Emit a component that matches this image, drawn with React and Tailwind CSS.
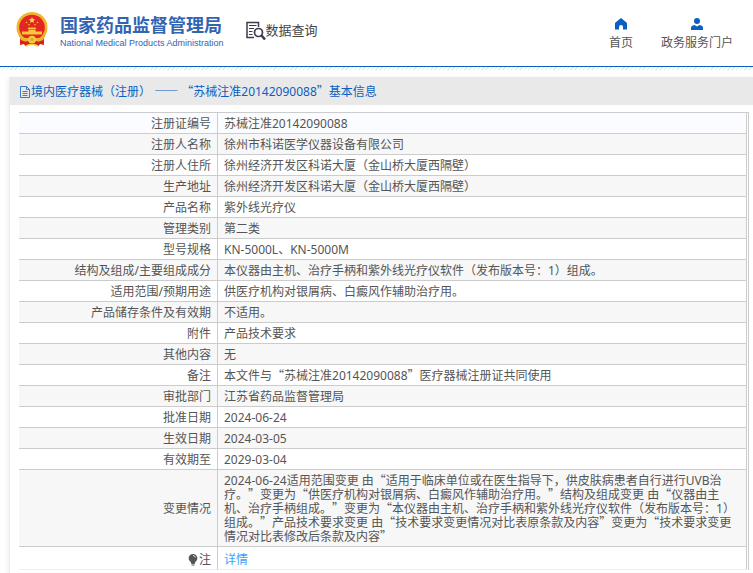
import React from "react";

const rows = [
  { label: "注册证编号", value: "苏械注准20142090088" },
  { label: "注册人名称", value: "徐州市科诺医学仪器设备有限公司" },
  { label: "注册人住所", value: "徐州经济开发区科诺大厦（金山桥大厦西隔壁）" },
  { label: "生产地址", value: "徐州经济开发区科诺大厦（金山桥大厦西隔壁）" },
  { label: "产品名称", value: "紫外线光疗仪" },
  { label: "管理类别", value: "第二类" },
  { label: "型号规格", value: "KN-5000L、KN-5000M" },
  {
    label: "结构及组成/主要组成成分",
    value: "本仪器由主机、治疗手柄和紫外线光疗仪软件（发布版本号：1）组成。",
  },
  { label: "适用范围/预期用途", value: "供医疗机构对银屑病、白癜风作辅助治疗用。" },
  { label: "产品储存条件及有效期", value: "不适用。" },
  { label: "附件", value: "产品技术要求" },
  { label: "其他内容", value: "无" },
  { label: "备注", value: "本文件与“苏械注准20142090088”医疗器械注册证共同使用" },
  { label: "审批部门", value: "江苏省药品监督管理局" },
  { label: "批准日期", value: "2024-06-24" },
  { label: "生效日期", value: "2024-03-05" },
  { label: "有效期至", value: "2029-03-04" },
  {
    label: "变更情况",
    value:
      "2024-06-24适用范围变更 由“适用于临床单位或在医生指导下，供皮肤病患者自行进行UVB治疗。”变更为“供医疗机构对银屑病、白癜风作辅助治疗用。”结构及组成变更 由“仪器由主机、治疗手柄组成。”变更为“本仪器由主机、治疗手柄和紫外线光疗仪软件（发布版本号：1）组成。”产品技术要求变更 由“技术要求变更情况对比表原条款及内容”变更为“技术要求变更情况对比表修改后条款及内容”",
  },
];

// Curly quotes and dashes take the full-width form of the Chinese font
const Zh = ({ children }) =>
  children.split(/([“”—]+)/).map((part, i) =>
    i % 2 ? (
      <span key={i} className="font-['Noto_Sans_CJK_SC',sans-serif] leading-none">
        {part}
      </span>
    ) : (
      part
    )
  );

const Emblem = () => (
  <svg className="h-9 w-8" viewBox="0 0 32 36" aria-hidden="true">
    <path d="M4 23v10l4-1 2 2 4-1.500 2 .5 2-.5 4 1.500 2-2 4 1V23z" fill="#d8201c" />
    <circle cx="16" cy="15.500" r="15.500" fill="#f0b52c" />
    <circle cx="16" cy="15.500" r="12.800" fill="#e32621" />
    <path
      d="M16 5l.9 2.100 2.300.2-1.800 1.500.6 2.200-2-1.200-2 1.200.6-2.200-1.800-1.500 2.300-.2z"
      fill="#ffd94a"
    />
    <g fill="#fbc638">
      <circle cx="10.500" cy="10.500" r=".8" />
      <circle cx="21.500" cy="10.500" r=".8" />
      <circle cx="13" cy="12.800" r=".8" />
      <circle cx="19" cy="12.800" r=".8" />
      <path d="M12.500 15.500h7l1 1.500h-9zM12.500 17.500h7v2h-7zM6 19.500h20v3H6z" />
    </g>
    <path d="M2 22c4 5 9 4 14 4s10 1 14-4l-3 6c-6 3-16 3-22 0z" fill="#f0b52c" />
    <circle cx="16" cy="27.500" r="3.800" fill="#f8ca45" />
    <circle cx="16" cy="27.500" r="1.800" fill="#e9a828" />
    <path d="M8 30l4-1 1.500 2.500L9 34zM24 30l-4-1-1.500 2.500L23 34z" fill="#d8201c" />
    <path d="M10 34q6-3.500 12 0" fill="none" stroke="#f8ca45" strokeWidth="1.600" />
  </svg>
);

const SearchDocIcon = () => (
  <svg className="h-5 w-5" viewBox="0 0 20 20" fill="none" stroke="#3d3c4e" aria-hidden="true">
    <path d="M12.500 7V2.500H1v15h7" strokeWidth="1.500" />
    <path d="M3 5.500h7.500M3 8.500h5M3 11.500h3.500M3 14.500h3.500" strokeWidth="1.200" />
    <circle cx="12.500" cy="12.500" r="4" strokeWidth="1.700" />
    <path d="M15.500 15.500l3.500 4" strokeWidth="2.500" />
  </svg>
);

const HomeIcon = () => (
  <svg className="h-3 w-3" viewBox="0 0 12 12" fill="#0a5fc2" aria-hidden="true">
    <path d="M6 0L11.500 4.500q.5.400.5 1v6H8V9q0-2-2-2T4 9v2.500H0v-6q0-.6.5-1z" />
  </svg>
);

const UserIcon = () => (
  <svg className="h-3 w-3" viewBox="0 0 12 12" fill="#0a5fc2" aria-hidden="true">
    <circle cx="6" cy="3" r="3" />
    <path d="M0 12V10q0-2.500 3.500-3L6 8.500 8.500 7Q12 7.500 12 10v2z" />
  </svg>
);

const FileIcon = () => (
  <svg className="h-3 w-3" viewBox="0 0 12 12" fill="none" stroke="#0a5fc2" aria-hidden="true">
    <path d="M1.500.5h6l3 3v8h-9zM7.500.5v3h3M3.500 5.500h5M3.500 7.500h5M3.500 9.500h5" strokeWidth=".8" />
  </svg>
);

const BulbIcon = () => (
  <svg className="h-3 w-3" viewBox="0 0 12 12" aria-hidden="true">
    <path d="M6 0a4.300 4.300 0 0 0-2.500 7.800L4.500 10h3l1-2.200A4.300 4.300 0 0 0 6 0z" fill="#555" />
    <path d="M4.500 10.500h3v1h-3z" fill="#555" />
    <path d="M6 1.500q2 .2 2.500 2" fill="none" stroke="#fff" strokeWidth=".8" />
  </svg>
);

const Header = () => (
  <header className="flex h-[67px] items-start border-b border-[#0a5fc2] bg-white">
    <a href="#" className="ml-4 mt-3 flex items-start gap-3">
      <Emblem />
      <span className="flex flex-col pt-px text-[#3364b2]">
        <span className="text-[18px] leading-6 font-bold whitespace-nowrap">国家药品监督管理局</span>
        <span className="font-['Liberation_Sans',sans-serif] text-[9px] leading-3 whitespace-nowrap">
          National Medical Products Administration
        </span>
      </span>
    </a>
    <a href="#" className="mt-5 ml-[22px] flex items-start text-[13px] leading-5 whitespace-nowrap text-[#444]">
      <SearchDocIcon />
      数据查询
    </a>
    <nav className="mt-[18px] mr-5 ml-auto flex gap-7 whitespace-nowrap">
      <a href="#" className="flex flex-col items-center gap-[5px]">
        <HomeIcon />
        <span className="leading-4">首页</span>
      </a>
      <a href="#" className="flex flex-col items-center gap-[5px]">
        <UserIcon />
        <span className="leading-4">政务服务门户</span>
      </a>
    </nav>
  </header>
);

const App = () => {
  return (
    <div
      lang="zh-CN"
      className="overflow-hidden bg-white font-['Noto_Sans','Noto_Sans_CJK_SC',sans-serif] text-[12px] leading-[14px] text-[#555] [text-spacing-trim:space-all]"
    >
      <Header />
      <div className="h-[3px] bg-[repeating-linear-gradient(135deg,#e8e8e8_0_1px,#fff_1px_3px)]" />
      <main className="mt-[7px] ml-[9px] border-l border-[#eee] shadow-[0_2px_6px_rgba(0,0,0,0.1)]">
        <h1 className="flex h-7 items-center bg-[#e9e9e9] pt-0.5 pl-[9px] text-[#0a5fc2]">
          <FileIcon />
          <span className="whitespace-pre">
            <Zh>境内医疗器械（注册） —— “苏械注准20142090088”基本信息</Zh>
          </span>
        </h1>
        <div className="bg-white pt-[7px] pr-1 pb-1 pl-[9px]">
          <table className="w-full table-fixed border-separate border-spacing-0 border-t border-r border-[#ccc] pr-px">
            <colgroup>
              <col className="w-[199px]" />
              <col />
            </colgroup>
            <tbody>
              {rows.map((row, i) => (
                <tr key={row.label} className={i === 0 ? "bg-[#fafcff]" : "odd:bg-white even:bg-[#f7f7f7]"}>
                  <th
                    scope="row"
                    className="border-r border-b border-[#ccc] pt-1 pr-1.5 pb-0.5 text-right font-normal"
                  >
                    {row.label}
                  </th>
                  <td className="border-r border-b border-[#ccc] px-1.5 pt-1 pb-0.5">
                    <Zh>{row.value}</Zh>
                  </td>
                </tr>
              ))}
              <tr>
                <th
                  scope="row"
                  className="border-r border-b border-r-[#ccc] border-b-[#eee] pt-1.5 pr-1.5 pb-0.5 font-normal"
                >
                  <span className="flex items-center justify-end">
                    <BulbIcon />注
                  </span>
                </th>
                <td className="border-r border-b border-r-[#ccc] border-b-[#eee] px-1.5 pt-1.5 pb-0.5">
                  <a href="#" className="text-[#409eff]">
                    详情
                  </a>
                </td>
              </tr>
            </tbody>
          </table>
        </div>
      </main>
    </div>
  );
};

export default App;
